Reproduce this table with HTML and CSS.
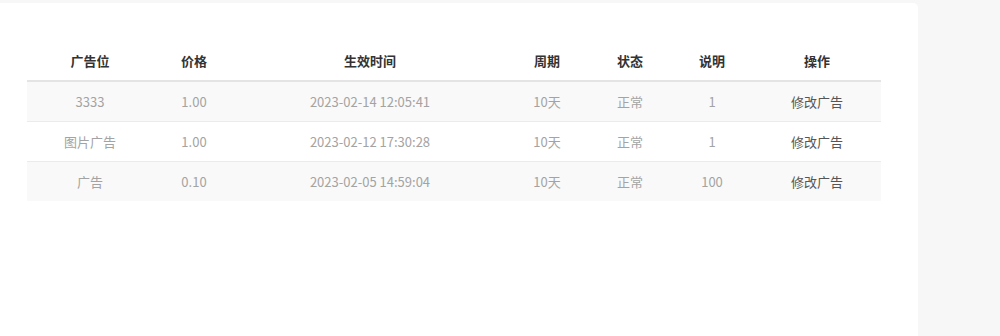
FILE: index.html
```html
<!DOCTYPE html>
<html lang="zh-CN">
<head>
<meta charset="utf-8">
<title>广告位</title>
<link rel="stylesheet" href="styles.css">
</head>
<body>
<div class="page">
  <div class="card">
    <table class="ad-table">
      <colgroup>
        <col class="c1"><col class="c2"><col class="c3"><col class="c4"><col class="c5"><col class="c6"><col class="c7">
      </colgroup>
      <thead>
        <tr><th>广告位</th><th>价格</th><th>生效时间</th><th>周期</th><th>状态</th><th>说明</th><th>操作</th></tr>
      </thead>
      <tbody>
        <tr class="stripe"><td>3333</td><td>1.00</td><td>2023-02-14 12:05:41</td><td>10天</td><td>正常</td><td>1</td><td class="op">修改广告</td></tr>
        <tr><td>图片广告</td><td>1.00</td><td>2023-02-12 17:30:28</td><td>10天</td><td>正常</td><td>1</td><td class="op">修改广告</td></tr>
        <tr class="stripe"><td>广告</td><td>0.10</td><td>2023-02-05 14:59:04</td><td>10天</td><td>正常</td><td>100</td><td class="op">修改广告</td></tr>
      </tbody>
    </table>
  </div>
</div>
</body>
</html>
```

FILE: styles.css
```css
html, body {
  margin: 0;
  padding: 0;
  background: #f7f7f7;
  font-family: "Microsoft YaHei", "Noto Sans CJK SC", "Noto Sans", sans-serif;
  font-size: 13px;
}
.page {
  padding-top: 3px;
  height: 333px;
  overflow: hidden;
}
.card {
  width: 918px;
  height: 400px;
  background: #ffffff;
  border-top-right-radius: 5px;
  box-sizing: border-box;
  padding: 37px 0 0 27px;
}
.ad-table {
  width: 854px;
  border-collapse: collapse;
  table-layout: fixed;
}
.c1 { width: 126px; }
.c2 { width: 82px; }
.c3 { width: 270px; }
.c4 { width: 84px; }
.c5 { width: 82px; }
.c6 { width: 82px; }
.c7 { width: 128px; }
.ad-table th {
  height: 40px;
  padding: 0;
  text-align: center;
  font-weight: bold;
  color: #333333;
  border-bottom: 2px solid #e4e4e4;
}
.ad-table td {
  height: 39px;
  padding: 0;
  text-align: center;
  color: #a3a3a3;
  border-bottom: 1px solid #ebebeb;
}
.ad-table tbody tr:last-child td {
  border-bottom: none;
  height: 39px;
}
.ad-table tr.stripe td {
  background: #f9f9f9;
}
.ad-table td.op {
  color: #555555;
}
```
